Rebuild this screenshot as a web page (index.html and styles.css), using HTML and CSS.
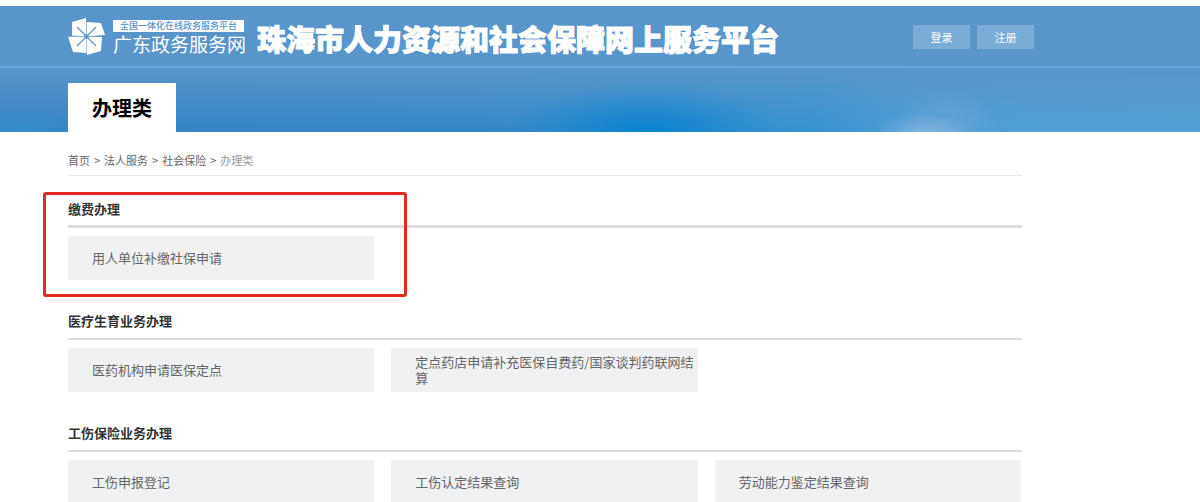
FILE: index.html
```
<!DOCTYPE html>
<html lang="zh-CN">
<head>
    <meta charset="UTF-8">
    <meta name="viewport" content="width=device-width, initial-scale=1.0">
    <title>珠海市人力资源和社会保障网上服务平台</title>
    <link rel="stylesheet" href="styles.css">
</head>
<body>

<header class="header">
    <div class="topbar">
        <a class="logo" href="#">
            <svg class="logo-icon" viewBox="0 0 38 38" aria-hidden="true">
                <g fill="#fff">
                    <path d="M4 4 L18 0 L18.3 18.3 L4 17.5 Z"/>
                    <path d="M18.8 4 L33 5 L37 17 L18.8 18.3 Z"/>
                    <path d="M0 18.8 L18.3 18.8 L18.3 35 L5 34 Z"/>
                    <path d="M18.8 18.8 L34 19 L33 33 L18.8 37 Z"/>
                </g>
                <path d="M9 9 L28 28 M28 9 L9 28" stroke="#5795cb" stroke-width="1.1"/>
                <circle cx="18.5" cy="18.5" r="2.2" fill="#5795cb"/>
            </svg>
            <span class="logo-text">
                <span class="logo-tag">全国一体化在线政务服务平台</span>
                <span class="logo-name">广东政务服务网</span>
            </span>
        </a>
        <h1 class="site-title">珠海市人力资源和社会保障网上服务平台</h1>
        <div class="user-btns">
            <button type="button">登录</button>
            <button type="button">注册</button>
        </div>
    </div>
    <div class="banner">
        <a class="tab" href="#">办理类</a>
    </div>
</header>

<main class="content">
    <nav class="crumbs">
        <a href="#">首页</a>
        <span>&gt;</span>
        <a href="#">法人服务</a>
        <span>&gt;</span>
        <a href="#">社会保险</a>
        <span>&gt;</span>
        <span class="current">办理类</span>
    </nav>

    <section class="group marked">
        <h2>缴费办理</h2>
        <div class="items">
            <a href="#">用人单位补缴社保申请</a>
        </div>
    </section>

    <section class="group">
        <h2>医疗生育业务办理</h2>
        <div class="items">
            <a href="#">医药机构申请医保定点</a>
            <a href="#">定点药店申请补充医保自费药/国家谈判药联网结算</a>
        </div>
    </section>

    <section class="group">
        <h2>工伤保险业务办理</h2>
        <div class="items">
            <a href="#">工伤申报登记</a>
            <a href="#">工伤认定结果查询</a>
            <a href="#">劳动能力鉴定结果查询</a>
        </div>
    </section>
</main>

</body>
</html>
```

FILE: styles.css
```
*, *::after {
    box-sizing: border-box;
}

body {
    margin: 0;
    padding-top: 6px;
    background: #fff;
    color: #666;
    font-family: "Noto Sans CJK SC", sans-serif;
    font-size: 13px;
}

a {
    color: inherit;
    text-decoration: none;
}

.header {
    background: #5795cb;
}

.topbar {
    display: flex;
    align-items: center;
    height: 62px;
    padding: 2px 166px 0 68px;
    border-bottom: 2px solid #6ba5d8;
}

.logo {
    display: flex;
    align-items: center;
    gap: 7px;
    color: #fff;
}

.logo-icon {
    width: 38px;
    height: 38px;
}

.logo-text {
    display: flex;
    flex-direction: column;
    align-items: flex-start;
    padding-top: 2px;
}

.logo-tag {
    padding: 0 7px;
    background: #fff;
    color: #5795cb;
    font-size: 9px;
    font-weight: 500;
    line-height: 12px;
    white-space: nowrap;
}

.logo-name {
    font-size: 19px;
    line-height: 24px;
    white-space: nowrap;
}

.site-title {
    margin: 2px 0 0 11px;
    color: #fff;
    font-size: 29px;
    font-weight: 900;
    line-height: 40px;
    white-space: nowrap;
    -webkit-text-stroke: 1px #fff;
}

.user-btns {
    display: flex;
    gap: 7px;
    margin-left: auto;
}

.user-btns button {
    width: 57px;
    height: 24px;
    padding: 0;
    border: 0;
    background: #7aacd8;
    color: #fff;
    font-family: inherit;
    font-size: 11px;
    line-height: 22px;
    cursor: pointer;
}

/* sky behind the tab */
.banner {
    display: flex;
    align-items: flex-end;
    height: 64px;
    padding-left: 68px;
    background:
        radial-gradient(ellipse 50px 18px at 77% 100%, rgba(140, 182, 224, 0.8), rgba(140, 182, 224, 0)),
        radial-gradient(ellipse 50px 36px at 79% 90%, rgba(140, 182, 224, 0.3), rgba(140, 182, 224, 0)),
        radial-gradient(ellipse 60px 24px at 2% 100%, rgba(55, 148, 209, 0.8), rgba(55, 148, 209, 0)),
        radial-gradient(ellipse 140px 48px at 54% 100%, #0583cf, rgba(5, 131, 207, 0.4) 50%, rgba(5, 131, 207, 0)),
        linear-gradient(to bottom, #5795cb, rgba(87, 149, 203, 0)),
        linear-gradient(to right, #3581c3, #3487c8 40%, #3794d1 68%, #4c9dd6 76%, #519fd6);
}

.tab {
    padding: 0 24px;
    background: #fff;
    color: #000;
    font-size: 20px;
    font-weight: bold;
    line-height: 49px;
}

.content {
    padding: 0 178px 0 68px;
}

.crumbs {
    display: flex;
    gap: 4px;
    height: 44px;
    padding-top: 20px;
    border-bottom: 1px solid #e8e8e8;
    font-size: 11px;
    line-height: 16px;
}

.crumbs .current {
    color: #999;
}

.group {
    position: relative;
    margin-bottom: 30px;
}

.crumbs + .group {
    margin-top: 22px;
}

.group h2 {
    height: 30px;
    margin: 0 0 8px;
    border-bottom: 2px solid #dcdcdc;
    color: #333;
    font-size: 13px;
    line-height: 22px;
}

.items {
    display: grid;
    grid-template-columns: repeat(3, 1fr);
    gap: 17px;
    padding-right: 1px;
}

.items a {
    display: flex;
    align-items: center;
    height: 44px;
    padding-left: 24px;
    background: #f0f1f3;
    line-height: 16px;
}

.marked h2 {
    border-bottom-width: 3px;
}

/* red frame round the highlighted group */
.marked::after {
    content: "";
    position: absolute;
    top: -6px;
    left: -25px;
    width: 364px;
    height: 105px;
    border: 3px solid #e42a1f;
    border-radius: 3px;
    pointer-events: none;
}
```
